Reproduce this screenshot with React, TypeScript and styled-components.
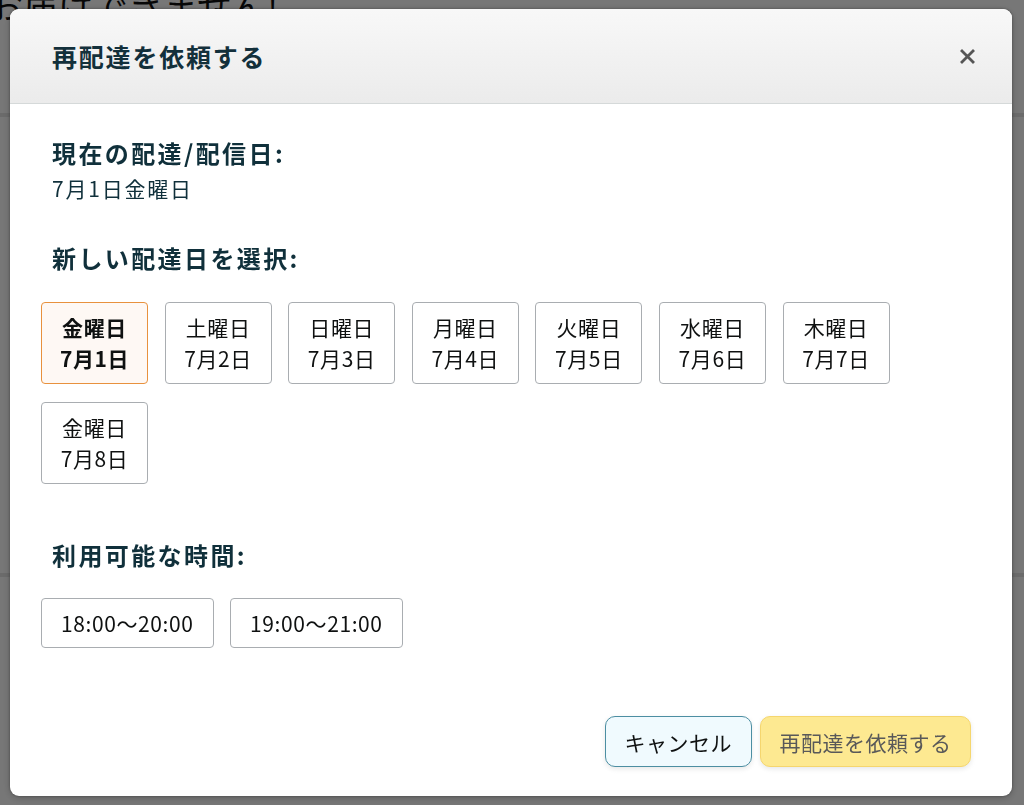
import React from 'react';
import styled, { createGlobalStyle } from 'styled-components';

const GlobalStyle = createGlobalStyle`
    html, body {
        margin: 0;
        padding: 0;
        height: 100%;
        overflow: hidden;
        background: #ffffff;
        font-family: "Noto Sans CJK JP", "Noto Sans", sans-serif;
    }
`;

const PageBehind = styled.div`
    width: 1024px;
    height: 805px;
    overflow: hidden;
    background: #ffffff;
`;

const PageHeadline = styled.h1`
    margin: -22px 0 0 -12px;
    font-size: 35px;
    font-weight: 400;
    color: #111;
    white-space: nowrap;
`;

const PageRule = styled.div<{ $gap: number }>`
    margin-top: ${(p) => p.$gap}px;
    height: 4px;
    background: #e6e6e6;
`;

const Overlay = styled.div`
    position: fixed;
    inset: 0;
    background: rgba(0, 0, 0, 0.535);
    display: flex;
    align-items: flex-start;
    padding: 9px 12px 9px 10px;
`;

const Modal = styled.div`
    width: 1002px;
    height: 787px;
    background: #ffffff;
    border-radius: 9px;
    box-shadow: 0 0 3px rgba(0, 0, 0, 0.35), 0 2px 8px rgba(0, 0, 0, 0.2);
    display: flex;
    flex-direction: column;
    overflow: hidden;
`;

const Header = styled.header`
    height: 94px;
    flex: none;
    display: flex;
    align-items: center;
    justify-content: space-between;
    padding: 0 35px 0 42px;
    background: linear-gradient(#f8f8f8, #ebebeb);
    border-bottom: 1px solid #d5d9d9;
`;

const Title = styled.h2`
    margin: 0;
    font-size: 25px;
    font-weight: 700;
    letter-spacing: 1.8px;
    color: #13303b;
`;

const Close = styled.button`
    border: 0;
    background: none;
    padding: 0;
    width: 20px;
    height: 20px;
    display: flex;
    align-items: center;
    justify-content: center;
    cursor: pointer;
`;

const Body = styled.div`
    flex: 1;
    padding: 34px 42px 0 42px;
    display: flex;
    flex-direction: column;
`;

const Label = styled.h3<{ $top?: number }>`
    margin: ${(p) => p.$top ?? 0}px 0 0 0;
    font-size: 24px;
    line-height: 30px;
    font-weight: 700;
    letter-spacing: 2.4px;
    color: #10303b;
`;

const Value = styled.div`
    margin-top: 6px;
    font-size: 21px;
    line-height: 28px;
    letter-spacing: 1.8px;
    color: #10303b;
`;

const ChoiceGrid = styled.div<{ $top: number }>`
    margin: ${(p) => p.$top}px -11px 0 -11px;
    display: flex;
    flex-wrap: wrap;
    column-gap: 16.6px;
    row-gap: 18px;
`;

const DayButton = styled.button<{ $selected?: boolean }>`
    width: 107px;
    height: 82px;
    box-sizing: border-box;
    border: 1px solid ${(p) => (p.$selected ? '#e8913d' : '#a9adb1')};
    border-radius: 4px;
    background: ${(p) => (p.$selected ? '#fef8f4' : '#ffffff')};
    font-family: inherit;
    font-size: 21px;
    line-height: 31px;
    font-weight: ${(p) => (p.$selected ? 700 : 400)};
    letter-spacing: 0.6px;
    color: #0f1111;
    padding: 0;
    display: flex;
    flex-direction: column;
    align-items: center;
    justify-content: center;
    cursor: pointer;
`;

const TimeButton = styled.button`
    height: 50px;
    box-sizing: border-box;
    padding: 0 19px;
    border: 1px solid #a9adb1;
    border-radius: 4px;
    background: #ffffff;
    font-family: inherit;
    font-size: 21px;
    letter-spacing: 0.6px;
    color: #0f1111;
    cursor: pointer;
`;

const Footer = styled.footer`
    display: flex;
    justify-content: flex-end;
    gap: 8px;
    padding: 0 41px 29px 0;
`;

const ActionButton = styled.button<{ $primary?: boolean }>`
    height: 51px;
    box-sizing: border-box;
    padding: 0 ${(p) => (p.$primary ? 18.5 : 19)}px;
    border-radius: 10px;
    border: ${(p) => (p.$primary ? '1px solid #f5d66e' : '1.5px solid #4c8ea2')};
    background: ${(p) => (p.$primary ? '#fde991' : '#f0fafe')};
    color: ${(p) => (p.$primary ? '#595959' : '#0f1111')};
    font-family: inherit;
    font-size: 21px;
    letter-spacing: 0.5px;
    box-shadow: 0 2px 5px rgba(213, 217, 217, 0.6);
    cursor: pointer;
`;

const days = [
    { week: '金曜日', date: '7月1日' },
    { week: '土曜日', date: '7月2日' },
    { week: '日曜日', date: '7月3日' },
    { week: '月曜日', date: '7月4日' },
    { week: '火曜日', date: '7月5日' },
    { week: '水曜日', date: '7月6日' },
    { week: '木曜日', date: '7月7日' },
    { week: '金曜日', date: '7月8日' },
];

const times = ['18:00～20:00', '19:00～21:00'];

const App: React.FC = () => {
    return (
        <>
            <GlobalStyle />
            <PageBehind>
                <PageHeadline>お届けできません!</PageHeadline>
                <PageRule $gap={84} />
                <PageRule $gap={456} />
            </PageBehind>
            <Overlay>
                <Modal role="dialog">
                    <Header>
                        <Title>再配達を依頼する</Title>
                        <Close aria-label="閉じる">
                            <svg width="15" height="15" viewBox="0 0 15 15">
                                <path d="M2 2L13 13M13 2L2 13" stroke="#555" strokeWidth="2.8" strokeLinecap="square" />
                            </svg>
                        </Close>
                    </Header>
                    <Body>
                        <Label>現在の配達/配信日:</Label>
                        <Value>7月1日金曜日</Value>
                        <Label $top={41}>新しい配達日を選択:</Label>
                        <ChoiceGrid $top={29}>
                            {days.map((d, i) => (
                                <DayButton key={d.date} $selected={i === 0}>
                                    <span>{d.week}</span>
                                    <span>{d.date}</span>
                                </DayButton>
                            ))}
                        </ChoiceGrid>
                        <Label $top={56}>利用可能な時間:</Label>
                        <ChoiceGrid $top={28}>
                            {times.map((t) => (
                                <TimeButton key={t}>{t}</TimeButton>
                            ))}
                        </ChoiceGrid>
                    </Body>
                    <Footer>
                        <ActionButton>キャンセル</ActionButton>
                        <ActionButton $primary>再配達を依頼する</ActionButton>
                    </Footer>
                </Modal>
            </Overlay>
        </>
    );
};

export default App;
